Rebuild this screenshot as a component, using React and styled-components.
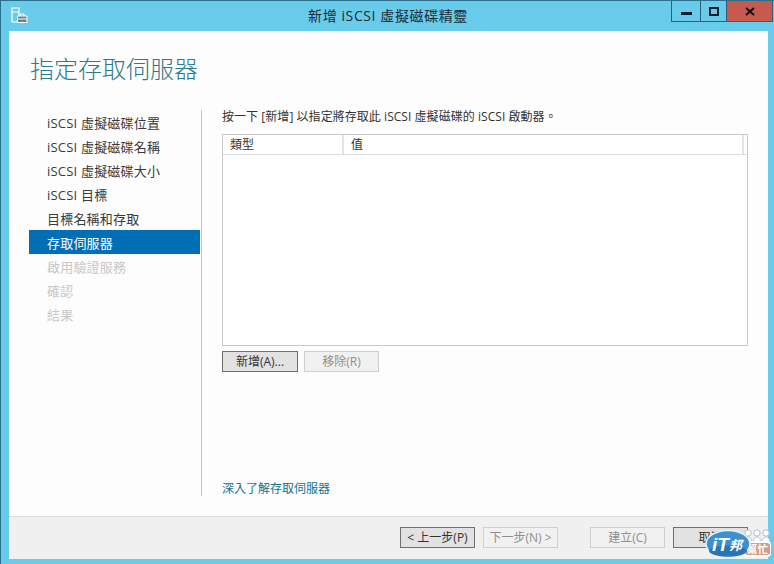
import styled, { createGlobalStyle } from "styled-components";

const GlobalStyle = createGlobalStyle`
  html, body {
    margin: 0;
    padding: 0;
    background: #69cbea;
  }
  * { box-sizing: border-box; }
`;

const FONT = `"Noto Sans CJK TC", "Noto Sans", sans-serif`;
const LATIN = `"Open Sans", "Noto Sans CJK TC", sans-serif`;

const Window = styled.div`
  position: relative;
  width: 774px;
  height: 564px;
  display: flex;
  flex-direction: column;
  background: #69cbea;
  border-top: 1px solid #2c6f8c;
  border-left: 1px solid #2c6f8c;
  padding: 0 6px 5px 8px;
  font-family: ${LATIN};
  overflow: hidden;
`;

const TitleBar = styled.div`
  height: 30px;
  flex: none;
  display: flex;
  align-items: flex-start;
  margin-right: -5px;
  position: relative;
`;

const AppIcon = styled.svg`
  width: 17px;
  height: 17px;
  margin: 6px 0 0 2px;
  flex: none;
`;

const Title = styled.div`
  flex: 1;
  padding: 5px 0 0 77px;
  text-align: center;
  font-size: 14px;
  letter-spacing: 0.6px;
  line-height: 19px;
  color: #1c2a33;
`;

const Controls = styled.div`
  display: flex;
  height: 21px;
  border: 1px solid #2c5f7a;
  border-top: 0;
`;

const Control = styled.div`
  width: ${(p) => p.$w}px;
  height: 100%;
  display: flex;
  align-items: center;
  justify-content: center;
  background: ${(p) => (p.$close ? "#c75a4e" : "transparent")};
  border-left: ${(p) => (p.$first ? "0" : "1px solid #2c5f7a")};
`;

const Client = styled.div`
  flex: 1;
  min-height: 0;
  display: flex;
  flex-direction: column;
  background: #fdfdfd;
`;

const Heading = styled.h1`
  margin: 0;
  padding: 20px 0 0 21px;
  height: 79px;
  flex: none;
  font-family: ${FONT};
  font-weight: 300;
  font-size: 24px;
  line-height: 33px;
  color: #2b7a90;
`;

const Main = styled.div`
  flex: 1;
  min-height: 0;
  display: flex;
`;

const Side = styled.nav`
  width: 171px;
  margin: 0 0 0 20px;
  flex: none;
  display: flex;
  flex-direction: column;
`;

const Step = styled.div`
  height: 24px;
  padding-left: 18px;
  font-size: 13px;
  letter-spacing: 0.2px;
  line-height: 26px;
  white-space: nowrap;
  background: ${(p) => (p.$active ? "#006fb5" : "transparent")};
  color: ${(p) => (p.$active ? "#ffffff" : p.$off ? "#c8c8c8" : "#3a3a3a")};
`;

const Divider = styled.div`
  width: 1px;
  height: 386px;
  margin-left: 1px;
  background: #c4c4c4;
  flex: none;
`;

const Pane = styled.section`
  width: 526px;
  margin-left: 20px;
  display: flex;
  flex-direction: column;
`;

const Intro = styled.p`
  margin: 0;
  height: 24px;
  font-size: 12px;
  letter-spacing: 0.05px;
  line-height: 14px;
  color: #333333;
  white-space: nowrap;
`;

const Table = styled.div`
  width: 526px;
  height: 212px;
  flex: none;
  border: 1px solid #c9c9c9;
  background: #ffffff;
`;

const TableHead = styled.div`
  height: 20px;
  display: flex;
  border-bottom: 1px solid #dcdcdc;
`;

const HeadCell = styled.div`
  font-size: 12px;
  line-height: 20px;
  color: #333333;
  padding-left: ${(p) => p.$pad}px;
  width: ${(p) => (p.$w ? `${p.$w}px` : "auto")};
  flex: ${(p) => (p.$w ? "none" : "1")};
  border-right: 2px solid #e4e4e4;
`;

const HeadTail = styled.div`
  width: 3px;
  flex: none;
`;

const Buttons = styled.div`
  display: flex;
  gap: 6px;
  margin-top: 5px;
`;

const Btn = styled.div`
  width: ${(p) => p.$w || 75}px;
  height: 21px;
  font-size: 12px;
  line-height: 19px;
  text-align: center;
  white-space: nowrap;
  overflow: hidden;
  border: 1px solid ${(p) => (p.$off ? "#cfcfcf" : p.$focus ? "#6f6f6f" : "#adadad")};
  background: ${(p) => (p.$off ? "#f1f1f1" : "#e2e2e2")};
  color: ${(p) => (p.$off ? "#8f8f8f" : "#333333")};
`;

const HelpLink = styled.a`
  margin-top: 109px;
  font-size: 12px;
  line-height: 16px;
  color: #17708a;
`;

const Footer = styled.footer`
  height: 43px;
  flex: none;
  display: flex;
  align-items: flex-start;
  padding: 10px 0 0 391px;
  background: #f0f0f0;
  border-top: 1px solid #dcdcdc;
`;

const FooterGap = styled.div`
  width: ${(p) => p.$w}px;
  flex: none;
`;

const BadgeWrap = styled.div`
  position: absolute;
  left: 703px;
  top: 526px;
  width: 67px;
  height: 33px;
`;

const BadgeLogo = styled.text`
  font-family: "Liberation Sans", "Noto Sans CJK TC", sans-serif;
  font-weight: 700;
  font-style: ${(p) => (p.$plain ? "normal" : "italic")};
  fill: #ffffff;
`;

const steps = [
  { label: "iSCSI 虛擬磁碟位置" },
  { label: "iSCSI 虛擬磁碟名稱" },
  { label: "iSCSI 虛擬磁碟大小" },
  { label: "iSCSI 目標" },
  { label: "目標名稱和存取" },
  { label: "存取伺服器", active: true },
  { label: "啟用驗證服務", off: true },
  { label: "確認", off: true },
  { label: "結果", off: true },
];

const people = [44, 53, 62];

const Badge = () => (
  <BadgeWrap>
    <svg width="67" height="33" viewBox="0 0 67 33">
      {people.map((cx) => (
        <g key={cx} fill="#fff" stroke="#a9bfd8" strokeWidth="1">
          <circle cx={cx} cy="6" r="3.2" />
          <path d="M-4 16c0-4 2-6 4-6s4 2 4 6z" transform={`translate(${cx} 0)`} />
        </g>
      ))}
      <rect x="39" y="14" width="28" height="16" rx="4" fill="#fff" />
      <rect x="41" y="16" width="25" height="12" rx="3" fill="#cf9c86" />
      <BadgeLogo x="43" y="26" fontSize="10.5" $plain>幫忙</BadgeLogo>
      <ellipse cx="24" cy="17" rx="22" ry="13.5" fill="#3c8fd0" stroke="#e4f2fa" strokeWidth="1.5" />
      <ellipse cx="24" cy="24" rx="19" ry="5.5" fill="#2a74b6" />
      <BadgeLogo x="8" y="24" fontSize="19">iT</BadgeLogo>
      <BadgeLogo x="25" y="23" fontSize="13">邦</BadgeLogo>
    </svg>
  </BadgeWrap>
);

const App = () => {
  return (
    <>
      <GlobalStyle />
      <Window>
        <TitleBar>
          <AppIcon viewBox="0 0 17 17">
            <path d="M1 1h7v14H1z M1 5h7" fill="none" stroke="#fff" strokeWidth="1.2" />
            <path d="M6.5 9h9.5v6.5H6.5z" fill="#5f8396" stroke="#fff" strokeWidth="1" />
            <path d="M9.5 9V7h3.5v2" fill="none" stroke="#fff" strokeWidth="1" />
            <path d="M6.5 12h9.5" stroke="#fff" strokeWidth="1" />
          </AppIcon>
          <Title>新增 iSCSI 虛擬磁碟精靈</Title>
          <Controls>
            <Control $w={28} $first>
              <svg width="11" height="10" viewBox="0 0 11 10">
                <path d="M0 6h11v3H0z" fill="#0b1f33" />
              </svg>
            </Control>
            <Control $w={26}>
              <svg width="10" height="10" viewBox="0 0 10 10">
                <path d="M1 2h8v7H1z" fill="none" stroke="#0b1f33" strokeWidth="2" />
              </svg>
            </Control>
            <Control $w={46} $close>
              <svg width="10" height="9" viewBox="0 0 10 9">
                <path d="M1 1l8 7M9 1L1 8" stroke="#1a0a0a" strokeWidth="2.2" />
              </svg>
            </Control>
          </Controls>
        </TitleBar>
        <Client>
          <Heading>指定存取伺服器</Heading>
          <Main>
            <Side>
              {steps.map((s) => (
                <Step key={s.label} $active={s.active} $off={s.off}>
                  {s.label}
                </Step>
              ))}
            </Side>
            <Divider />
            <Pane>
              <Intro>按一下 [新增] 以指定將存取此 iSCSI 虛擬磁碟的 iSCSI 啟動器。</Intro>
              <Table>
                <TableHead>
                  <HeadCell $w={121} $pad={7}>類型</HeadCell>
                  <HeadCell $pad={7}>值</HeadCell>
                  <HeadTail />
                </TableHead>
              </Table>
              <Buttons>
                <Btn $focus $w={76}>新增(A)...</Btn>
                <Btn $off>移除(R)</Btn>
              </Buttons>
              <HelpLink>深入了解存取伺服器</HelpLink>
            </Pane>
          </Main>
          <Footer>
            <Btn $focus>&lt; 上一步(P)</Btn>
            <FooterGap $w={8} />
            <Btn $off>下一步(N) &gt;</Btn>
            <FooterGap $w={32} />
            <Btn $off>建立(C)</Btn>
            <FooterGap $w={8} />
            <Btn $focus>取消</Btn>
          </Footer>
        </Client>
        <Badge />
      </Window>
    </>
  );
};

export default App;
